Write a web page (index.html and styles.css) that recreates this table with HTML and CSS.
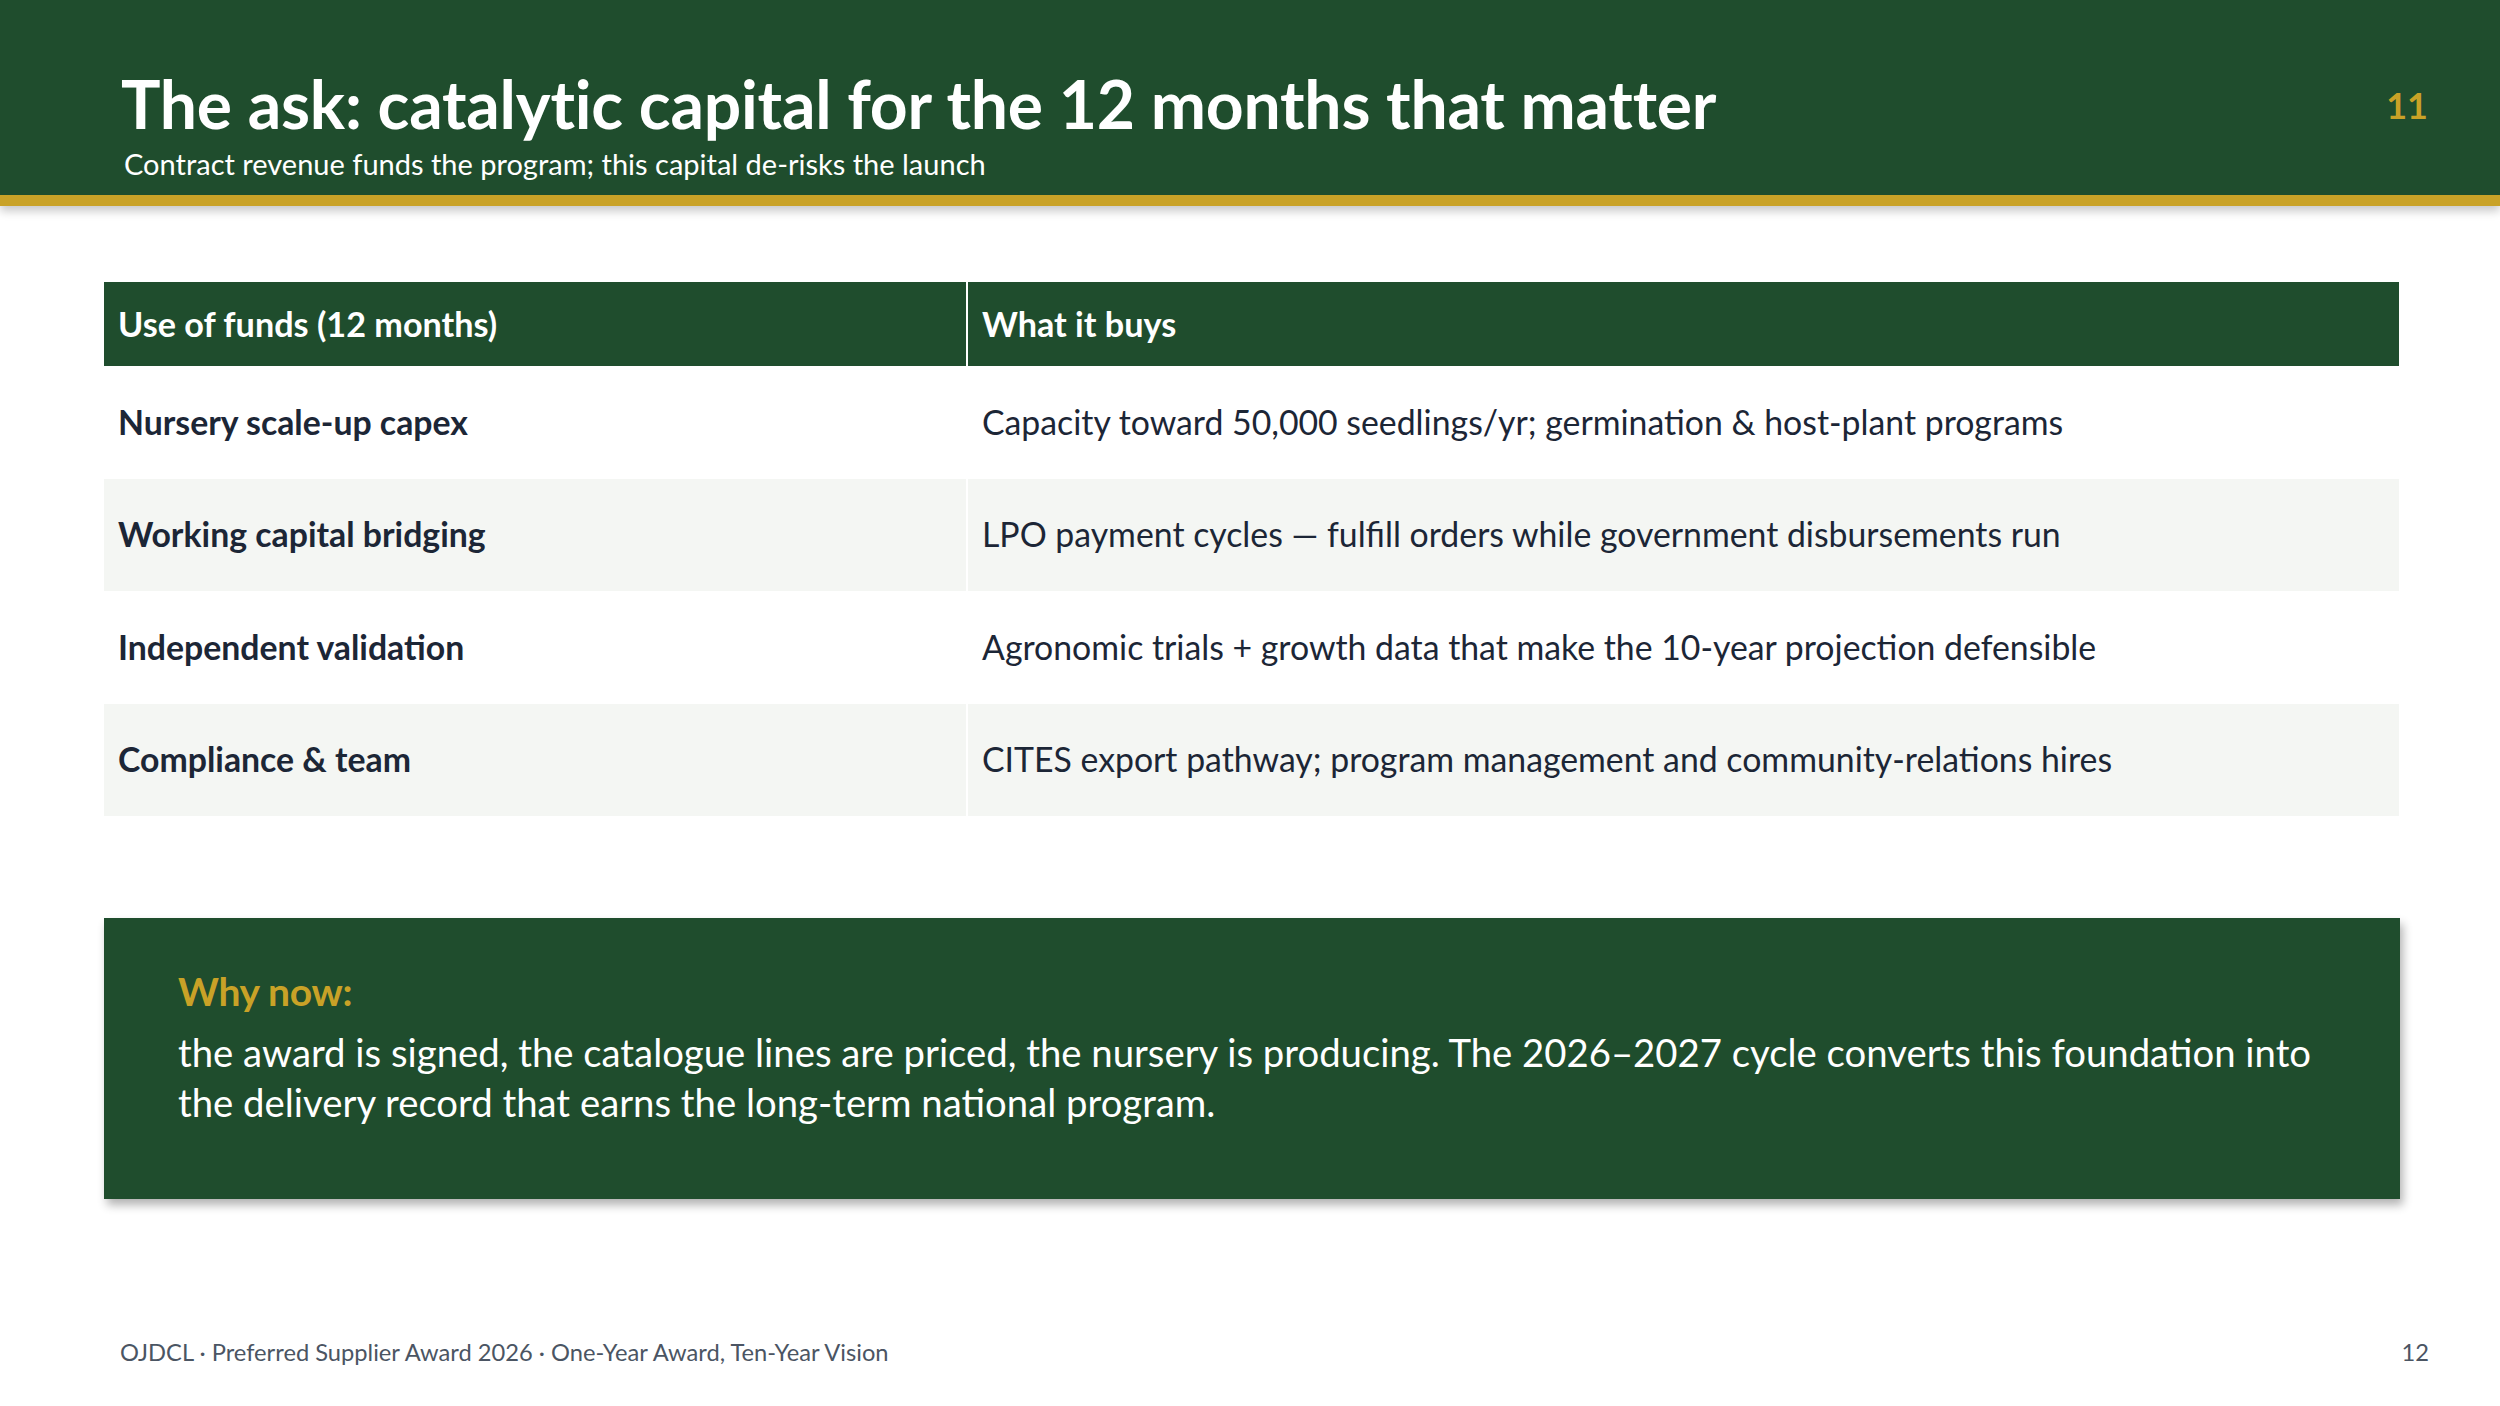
FILE: index.html
```html
<!DOCTYPE html>
<html lang="en">
<head>
<meta charset="utf-8">
<title>The ask</title>
<link rel="stylesheet" href="styles.css">
</head>
<body>
<div class="slide">
  <header class="top">
    <div class="titles">
      <h1 class="title">The ask: catalytic capital for the 12 months that matter</h1>
      <p class="subtitle">Contract revenue funds the program; this capital de-risks the launch</p>
    </div>
    <div class="section-num">11</div>
  </header>

  <main class="content">
    <table class="funds">
      <thead>
        <tr>
          <th class="c1">Use of funds (12 months)</th>
          <th class="c2">What it buys</th>
        </tr>
      </thead>
      <tbody>
        <tr>
          <td class="c1">Nursery scale-up capex</td>
          <td class="c2">Capacity toward 50,000 seedlings/yr; germination &amp; host-plant programs</td>
        </tr>
        <tr>
          <td class="c1">Working capital bridging</td>
          <td class="c2">LPO payment cycles — fulfill orders while government disbursements run</td>
        </tr>
        <tr>
          <td class="c1">Independent validation</td>
          <td class="c2">Agronomic trials + growth data that make the 10-year projection defensible</td>
        </tr>
        <tr>
          <td class="c1">Compliance &amp; team</td>
          <td class="c2">CITES export pathway; program management and community-relations hires</td>
        </tr>
      </tbody>
    </table>

    <section class="callout">
      <div class="callout-head">Why now:</div>
      <p class="callout-body">the award is signed, the catalogue lines are priced, the nursery is producing. The 2026–2027 cycle converts this foundation into the delivery record that earns the long-term national program.</p>
    </section>
  </main>

  <footer class="foot">
    <span class="foot-text">OJDCL · Preferred Supplier Award 2026 · One-Year Award, Ten-Year Vision</span>
    <span class="foot-num">12</span>
  </footer>
</div>
</body>
</html>
```

FILE: styles.css
```css
* {
  box-sizing: border-box;
}

html, body {
  margin: 0;
  padding: 0;
  background: #ffffff;
}

body {
  font-family: Lato, "Noto Sans", "Liberation Sans", sans-serif;
  color: #1c2636;
}

.slide {
  width: 2500px;
  height: 1406px;
  display: flex;
  flex-direction: column;
  background: #ffffff;
  overflow: hidden;
}

.top {
  height: 206px;
  background: #1f4d2d;
  border-bottom: 11px solid #c9a227;
  box-shadow: 0 5px 9px rgba(0, 0, 0, 0.22);
  display: flex;
  justify-content: space-between;
  align-items: flex-start;
  padding: 64px 72px 0 121px;
  position: relative;
  z-index: 1;
}

.titles {
  display: flex;
  flex-direction: column;
}

.title {
  margin: 0;
  font-size: 66px;
  line-height: 1.2;
  font-weight: 700;
  color: #ffffff;
  letter-spacing: -0.2px;
}

.subtitle {
  margin: 4px 0 0 3px;
  font-size: 29px;
  line-height: 1.2;
  font-weight: 400;
  color: #ffffff;
}

.section-num {
  margin-top: 20px;
  font-size: 36px;
  line-height: 1.2;
  font-weight: 700;
  color: #c9a227;
}

.content {
  padding: 76px 101px 0 104px;
  display: flex;
  flex-direction: column;
}

.funds {
  width: 2295px;
  border-collapse: collapse;
  table-layout: fixed;
}

.funds th,
.funds td {
  text-align: left;
  line-height: 1.2;
  vertical-align: middle;
}

.funds th.c1,
.funds td.c1 {
  width: 863px;
  border-right: 2px solid #ffffff;
}

.funds th {
  background: #1f4d2d;
  color: #ffffff;
  font-weight: 700;
  font-size: 34.2px;
  height: 84px;
  padding: 0 14px;
}

.funds td {
  height: 112.5px;
  padding: 0 14px;
  font-size: 33.8px;
  color: #1c2636;
}

.funds td.c1 {
  font-weight: 700;
}

.funds td.c2 {
  font-weight: 400;
}

.funds tbody tr:nth-child(even) td {
  background: #f4f6f3;
}

.callout {
  margin-top: 102px;
  width: 2296px;
  height: 281px;
  background: #1f4d2d;
  box-shadow: 3px 6px 9px rgba(0, 0, 0, 0.3);
  padding: 50px 75px 0 74px;
}

.callout-head {
  font-size: 39px;
  line-height: 1.2;
  font-weight: 700;
  color: #c9a227;
  letter-spacing: -0.3px;
}

.callout-body {
  margin: 12px 0 0 0;
  font-size: 38.3px;
  line-height: 50px;
  font-weight: 400;
  color: #ffffff;
}

.foot {
  margin-top: auto;
  padding: 0 71px 40px 120px;
  display: flex;
  justify-content: space-between;
  align-items: baseline;
  font-size: 23.7px;
  line-height: 1.2;
  color: #4b5563;
}
```
